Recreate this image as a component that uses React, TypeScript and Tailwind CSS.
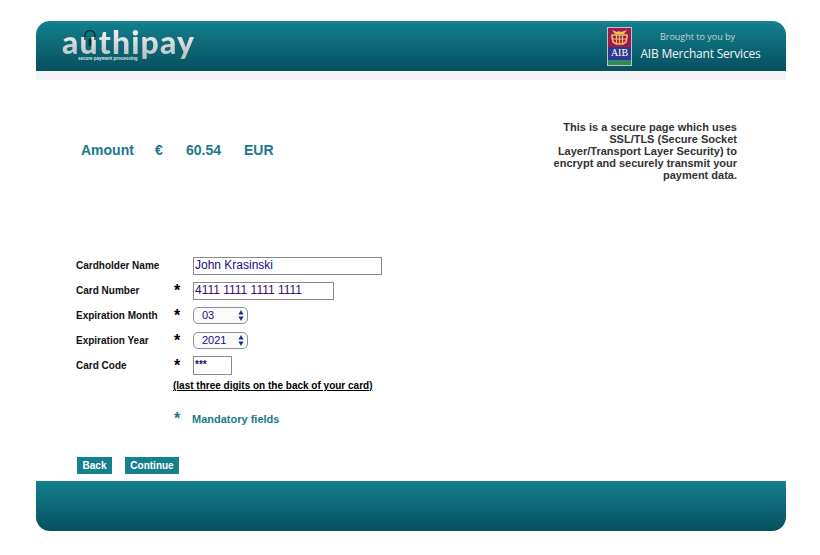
const font = "font-['Liberation_Sans',Arial,sans-serif]";

function Logo() {
  return (
    <div className="relative ml-[25px] h-[50px] w-[140px]">
      <span className="absolute left-[1px] top-[3px] bg-gradient-to-b from-white to-[#b4babc] bg-clip-text font-['Lato',sans-serif] text-[32px] font-black leading-[36px] tracking-[1.1px] text-transparent">
        authipay
      </span>
      <svg className="absolute left-[23px] top-[9px]" width="12" height="18" viewBox="0 0 12 18">
        <path d="M1 10V5.5a5 5 0 0 1 10 0V10" fill="none" stroke="#0d2a33" strokeWidth="1.3" />
        <rect x="4.7" y="9" width="2.6" height="7" rx="1.3" fill="#0d2a33" />
      </svg>
      <span className="absolute left-[17px] top-[35px] text-[4.5px] font-bold leading-[6px] text-[#dfe5e6]">
        secure payment processing
      </span>
    </div>
  );
}

function AibLogo() {
  return (
    <div className="flex h-[39px] w-[25px] flex-col border border-[#b9c4c6] bg-white">
      <div className="flex h-[20px] items-center justify-center bg-[#a3174f]">
        <svg width="19" height="16" viewBox="0 0 19 16">
          <path d="M2 1l5 2 2-1 2 1 6-2-3 4H5z" fill="#e8c060" />
          <path d="M2 6h15v2l-1 5-3 2H6l-3-2-1-5z" fill="none" stroke="#e8c060" strokeWidth="1.6" />
          <path d="M6.5 6v9M9.5 6v9M12.5 6v9M2.5 10h14" stroke="#e8c060" strokeWidth="1.2" />
        </svg>
      </div>
      <div className="flex h-[13px] items-center justify-center bg-[#2b3a8c] font-['Liberation_Serif',serif] text-[10px] leading-none text-white">
        AIB
      </div>
      <div className="mt-auto h-[5px] bg-[#2f8a5f]" />
    </div>
  );
}

function Star({ teal }: { teal?: boolean }) {
  return (
    <span className={`pl-[1px] text-[16px] font-bold leading-[16px] ${teal ? "text-[#1a7a8a]" : "text-black"}`}>*</span>
  );
}

function Label({ children }: { children: string }) {
  return <span className="text-[10px] font-bold text-[#111]">{children}</span>;
}

function FakeSelect({ value }: { value: string }) {
  return (
    <div className="relative h-[17px] w-[55px]">
      <select
        defaultValue={value}
        className={`${font} block h-full w-full appearance-none rounded-[5px] border border-[#8f8f8f] bg-[#fafafa] pl-[8px] text-[11px] leading-none text-[#1a0a80] outline-none`}
      >
        <option>{value}</option>
      </select>
      <svg className="absolute right-[4px] top-[3px]" width="6" height="11" viewBox="0 0 6 11">
        <path d="M3 0l2.6 4.4H.4z" fill="#1f2f8a" />
        <path d="M3 11L.4 6.6h5.2z" fill="#1f2f8a" />
      </svg>
    </div>
  );
}

export default function App() {
  return (
    <div className={`${font} h-[555px] w-[820px] overflow-hidden bg-white pt-[21px]`}>
      <div className="ml-[36px] w-[750px]">
        <header className="flex h-[50px] items-center justify-between rounded-t-[14px] bg-gradient-to-b from-[#14808f] to-[#06505f]">
          <Logo />
          <div className="mr-[24px] flex items-center gap-[7px]">
            <AibLogo />
            <div className="flex w-[123px] flex-col items-center whitespace-nowrap font-['Open_Sans',sans-serif] leading-none">
              <span className="pr-[6px] text-[9px] text-[#c3d3d6]">Brought to you by</span>
              <span className="mt-[7px] text-[12px] tracking-[-0.2px] text-[#f2f6f6]">AIB Merchant Services</span>
            </div>
          </div>
        </header>
        <div className="h-[9px] bg-[#f5f5f8]" />

        <div className="flex h-[173px] items-start justify-between pl-[45px] pr-[49px] pt-[41px]">
          <div className="mt-[20px] flex text-[14px] font-bold leading-[18px] text-[#1a7a8a]">
            <span className="w-[74px]">Amount</span>
            <span className="w-[31px]">€</span>
            <span className="w-[58px]">60.54</span>
            <span>EUR</span>
          </div>
          <p className="w-[190px] text-right text-[11px] font-bold leading-[12px] text-[#333]">
            This is a secure page which uses SSL/TLS (Secure Socket Layer/Transport Layer Security) to encrypt and securely transmit your payment data.
          </p>
        </div>

        <div className="grid grid-cols-[97px_20px_1fr] pl-[40px] [grid-auto-rows:25px]">
          <div className="flex items-center"><Label>Cardholder Name</Label></div>
          <div />
          <div className="flex items-center">
            <input readOnly value="John Krasinski" className="h-[18px] w-[189px] border border-[#8a8a8a] bg-white px-[1px] pb-[1px] text-[12px] text-[#1a0a80] outline-none" />
          </div>

          <div className="flex items-center"><Label>Card Number</Label></div>
          <div className="flex items-center"><Star /></div>
          <div className="flex items-center">
            <input readOnly value="4111 1111 1111 1111" className="h-[18px] w-[141px] border border-[#8a8a8a] bg-white px-[1px] pb-[1px] text-[12px] text-[#3a0a70] outline-none" />
          </div>

          <div className="flex items-center"><Label>Expiration Month</Label></div>
          <div className="flex items-center"><Star /></div>
          <div className="flex items-center"><FakeSelect value="03" /></div>

          <div className="flex items-center"><Label>Expiration Year</Label></div>
          <div className="flex items-center"><Star /></div>
          <div className="flex items-center"><FakeSelect value="2021" /></div>

          <div className="flex items-center"><Label>Card Code</Label></div>
          <div className="flex items-center"><Star /></div>
          <div className="flex items-center">
            <input readOnly value="***" className="h-[19px] w-[39px] border border-[#8a8a8a] bg-white px-[1px] pb-[3px] text-[10px] font-bold text-[#1a0a80] outline-none" />
          </div>
        </div>

        <div className="pl-[137px] pt-[2px] text-[10px] font-bold leading-[12px] text-black underline">
          (last three digits on the back of your card)
        </div>

        <div className="mt-[19px] flex h-[16px] items-center pl-[137px]">
          <span className="w-[19px]"><Star teal /></span>
          <span className="text-[11px] font-bold text-[#1a7a8a]">Mandatory fields</span>
        </div>

        <div className="mt-[30px] flex gap-[13px] pl-[41px]">
          <button className="h-[17px] w-[35px] bg-[#16808f] text-[10px] font-bold leading-none text-white">Back</button>
          <button className="h-[17px] w-[54px] bg-[#16808f] text-[10px] font-bold leading-none text-white">Continue</button>
        </div>

        <footer className="mt-[7px] h-[50px] rounded-b-[14px] bg-gradient-to-b from-[#14808f] to-[#06505f]" />
      </div>
    </div>
  );
}
